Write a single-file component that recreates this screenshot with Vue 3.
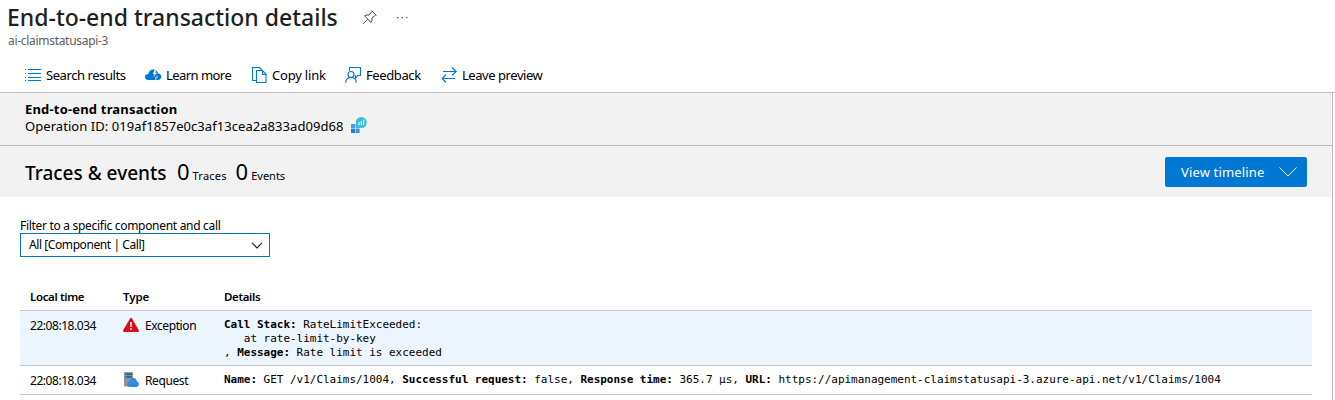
<script setup>
const commands = [
  { id: 'list', label: 'Search results', tracking: '-0.43px' },
  { id: 'cloud', label: 'Learn more', tracking: '-0.55px' },
  { id: 'copy', label: 'Copy link', tracking: '-0.2px' },
  { id: 'person', label: 'Feedback', tracking: '-0.4px' },
  { id: 'swap', label: 'Leave preview', tracking: '-0.45px' },
]
const request = [
  ['Name', 'GET /v1/Claims/1004'],
  ['Successful request', 'false'],
  ['Response time', '365.7 µs'],
  ['URL', 'https://apimanagement-claimstatusapi-3.azure-api.net/v1/Claims/1004'],
]
</script>

<template>
  <main class="blade">
    <header class="head">
      <div class="title-row">
        <h1>End-to-end transaction details</h1>
        <svg class="pin" width="16" height="16" viewBox="0 0 16 16" fill="none" stroke="#444" stroke-width="1">
          <path d="M9.6 1.6 14.4 6.4M10.2 2.2 6.8 6.1Q4.3 5.5 2.6 7L9 13.4Q10.5 11.7 9.9 9.2L13.8 5.8M5.8 10.2 1.2 14.8" />
        </svg>
        <svg class="dots" width="13" height="3" viewBox="0 0 13 3" fill="#555">
          <rect x="1" y="1" width="1.4" height="1.2" /><rect x="5.5" y="1" width="1.4" height="1.2" /><rect x="10" y="1" width="1.4" height="1.2" />
        </svg>
      </div>
      <p class="subtitle">ai-claimstatusapi-3</p>
      <nav class="commands">
        <button v-for="c in commands" :key="c.id" :class="['command', c.id]">
          <svg v-if="c.id === 'list'" width="17" height="16" viewBox="0 0 17 16" fill="#0078d4">
            <path d="M3 2h13v1H3zM3 6h13v1H3zM3 10h13v1H3zM3 13h13v1H3zM0 2h1v1H0zM0 6h1v1H0zM0 10h1v1H0zM0 13h1v1H0z" />
          </svg>
          <svg v-else-if="c.id === 'cloud'" width="17" height="16" viewBox="0 0 17 16">
            <path fill="#0078d4" d="M3.500 13A3.100 3.100 0 0 1 0 10C0 8.200 1.500 7.100 3.300 7.100 3.700 4.500 5.500 2.500 8.200 2.500c2.500 0 4.300 1.600 4.800 4 2 .1 3.300 1.500 3.300 3.300 0 1.900-1.400 3.200-3.300 3.200z" />
            <path fill="#fff" d="m9.500 3.300-1.700 3.600h1.800L8.300 10.200l3.700-4.500h-1.900L11.600 3.300z" />
            <path fill="none" stroke="#fff" stroke-width=".8" d="M10.800 13.200V10h2" />
          </svg>
          <svg v-else-if="c.id === 'copy'" width="16" height="16" viewBox="0 0 16 16" fill="none" stroke="#0078d4" stroke-width="1.100">
            <path d="M4.500 13.500h-4V.5h7l2.500 2.500M10.500 3.500h-6v12h9.500V7zM10.500 3.500v4H14" />
          </svg>
          <svg v-else-if="c.id === 'person'" width="17" height="16" viewBox="0 0 17 16" fill="none" stroke="#0078d4" stroke-width="1.100">
            <path d="M4.500 3.500v-3h11v8H13l-2.500 2.700V8.500h-.8" />
            <circle cx="6" cy="7.500" r="3" />
            <path d="M.7 15.800C.7 12.500 3 10.500 6 10.500s5.200 2 5.200 5.300" />
          </svg>
          <svg v-else width="16" height="16" viewBox="0 0 16 16" fill="none" stroke="#0078d4" stroke-width="1.100">
            <path d="M1 4.500h13M10.200.5l4 4-4 4M13 11.500H0M4 7.500l-4 4 4 4" />
          </svg>
          <span :style="{ letterSpacing: c.tracking }">{{ c.label }}</span>
        </button>
      </nav>
    </header>

    <div class="content">
      <section class="operation">
        <h2>End-to-end transaction</h2>
        <div class="op-id">
          <span>Operation ID: 019af1857e0c3af13cea2a833ad09d68</span>
          <svg width="16" height="16" viewBox="0 0 16 16">
            <path fill="#4a9cec" d="M0 7h4v4H0z" />
            <path fill="#1f7fdc" d="M0 11.600h4V16H0z" />
            <path fill="#3a93e8" d="M4.600 7h4v4h-4zM4.600 11.600h4V16h-4z" />
            <circle cx="10.300" cy="5.500" r="5.500" fill="#32bedd" />
            <path fill="#32bedd" d="m5.500 7-.6 4.300L9 10.800z" />
            <path fill="#fff" d="M7.300 5.200h1.200v3H7.300zM9.700 4.200h1.200v4H9.700zM12 2.700h1.200v5.500H12z" />
          </svg>
        </div>
      </section>

      <section class="summary">
        <h3>Traces &amp; events</h3>
        <span class="count">0</span><span class="unit traces">Traces</span>
        <span class="count">0</span><span class="unit">Events</span>
        <button class="timeline">
          <span>View timeline</span>
          <svg width="20" height="12" viewBox="0 0 20 12" fill="none" stroke="#fff" stroke-width="1"><path d="m1.500 1.500 8.500 8.500 8.500-8.500" /></svg>
        </button>
      </section>

      <section class="filter">
        <label>Filter to a specific component and call</label>
        <div class="select">
          <span>All [Component | Call]</span>
          <svg width="12" height="8" viewBox="0 0 12 8" fill="none" stroke="#222" stroke-width="1.200"><path d="m1 1.800 5 5 5-5" /></svg>
        </div>
      </section>

      <section class="grid">
        <div class="row columns">
          <span>Local time</span><span class="type-head">Type</span><span class="details-head">Details</span>
        </div>
        <div class="row exception">
          <span class="time">22:08:18.034</span>
          <span class="type">
            <svg width="16" height="16" viewBox="0 0 16 16">
              <path fill="#e00b1c" d="M7 1.600q1-1.500 2 0l6.700 11.500q.8 1.700-1 1.900H1.300q-1.800-.2-1-1.900z" />
              <path fill="#fff" d="M7 5h2l-.3 5H7.300zM7.200 11.200h1.600v1.700H7.200z" />
            </svg>
            <span>Exception</span>
          </span>
          <div class="trace">
            <pre><b>Call Stack:</b><span> RateLimitExceeded:</span></pre>
            <pre>   at rate-limit-by-key</pre>
            <pre><span>, </span><b>Message:</b><span> Rate limit is exceeded</span></pre>
          </div>
        </div>
        <div class="row request">
          <span class="time">22:08:18.034</span>
          <span class="type">
            <svg width="16" height="16" viewBox="0 0 16 16">
              <rect x="1" y="0" width="9" height="14.500" rx=".7" fill="#949494" />
              <path fill="#005ba1" d="M2.200 1.500h6.600V3H2.200zM2.200 4.200h6.600v1.500H2.200z" />
              <path fill="#50c7e8" d="M2.800 1.900h1v.8h-1zM2.800 4.600h1v.8h-1z" />
              <path fill="#2f8ae5" d="M7.200 15A3 3 0 0 1 4.200 12c0-1.600 1.200-2.700 2.700-2.800C7.200 7.200 8.600 6.100 10.300 6.100c2 0 3.300 1.400 3.500 3.300 1.400.2 2.100 1.300 2.100 2.700 0 1.600-1.200 2.900-2.800 2.900z" />
            </svg>
            <span>Request</span>
          </span>
          <pre><template v-for="([key, value], i) in request" :key="key"><b>{{ key }}:</b> {{ value }}{{ i < request.length - 1 ? ', ' : '' }}</template></pre>
        </div>
      </section>
    </div>
  </main>
</template>

<style scoped>
.blade {
  width: 1335px;
  height: 400px;
  overflow: hidden;
  background: #fff;
  color: #000;
  font: 13px/18px "Noto Sans", "Open Sans", sans-serif;
  display: flex;
  flex-direction: column;
}
h1, h2, h3, p, pre { margin: 0; }
button { border: 0; padding: 0; background: none; font: inherit; color: inherit; }
svg { flex: none; }
.head { height: 92px; flex: none; border-bottom: 1px solid #bdbdbd; }
.title-row { display: flex; align-items: center; height: 34px; padding-left: 7px; }
h1 { width: 355px; font-size: 23px; line-height: 34px; font-weight: 500; letter-spacing: 0; color: #201f1e; white-space: nowrap; }
.dots { margin-left: 18px; }
.subtitle { padding-left: 8px; font-size: 12px; line-height: 14px; letter-spacing: -0.3px; color: #605e5c; }
.commands { display: flex; padding: 18px 0 0 25px; }
.command { display: flex; align-items: center; height: 18px; white-space: nowrap; }
.command span { margin-left: 4px; }
.list { width: 120px; }
.cloud { width: 107px; }
.copy { width: 93px; }
.copy span { margin-left: 4px; }
.person { width: 97px; }
.content { width: 1332px; flex: 1; border-right: 1px solid #bdbdbd; }
.operation { height: 52px; padding-left: 25px; background: #f2f2f2; border-bottom: 1px solid #bdbdbd; }
h2 { padding-top: 8px; font-size: 13px; line-height: 17px; font-weight: 700; letter-spacing: 0.18px; }
.op-id { display: flex; line-height: 17px; letter-spacing: 0.06px; }
.op-id svg { margin: -1px 0 0 7px; }
.summary { display: flex; align-items: baseline; height: 51px; padding: 0 25px; background: #f2f2f2; line-height: 50px; }
h3 { width: 152px; font-size: 19px; font-weight: 500; letter-spacing: 0; }
.count { font-size: 22px; }
.unit { margin-left: 3px; font-size: 11px; }
.traces { width: 43px; letter-spacing: 0.2px; }
.timeline { align-self: flex-start; display: flex; align-items: center; width: 142px; height: 30px; margin: 11px 0 0 auto; padding-left: 16px; box-sizing: border-box; border-radius: 2px; background: #0078d4; color: #fff; line-height: 30px; letter-spacing: 0.15px; }
.timeline svg { margin-left: 14px; }
.filter { padding: 21px 0 0 20px; font-size: 12px; }
label { display: block; height: 15px; line-height: 15px; letter-spacing: -0.3px; }
.select { display: flex; align-items: center; justify-content: space-between; width: 250px; height: 24px; box-sizing: border-box; padding: 0 6px 0 8px; border: 1px solid #0078b8; letter-spacing: -0.42px; line-height: 22px; }
.grid { width: 1292px; margin: 26px 0 0 20px; font-size: 12px; }
.row { display: grid; grid-template-columns: 93px 101px 1fr; align-items: start; box-sizing: border-box; padding-left: 10px; border-bottom: 1px solid #c8c8c8; line-height: 16px; }
.columns { height: 28px; padding-top: 6px; font-size: 11.5px; font-weight: 600; letter-spacing: -0.36px; }
.type-head { letter-spacing: -0.1px; }
.exception { height: 55px; padding-top: 7px; background: #edf5fe; }
.request { height: 29px; padding-top: 6px; }
.time { letter-spacing: -0.45px; }
.type { display: flex; gap: 6px; letter-spacing: -0.4px; }
.exception .type svg { margin-top: -1px; }
pre { font: 11px/14px "DejaVu Sans Mono", "Liberation Mono", monospace; letter-spacing: -0.022px; }
.request pre { margin-top: 1px; }
.request .time, .request .type span { position: relative; top: 1px; }
</style>
